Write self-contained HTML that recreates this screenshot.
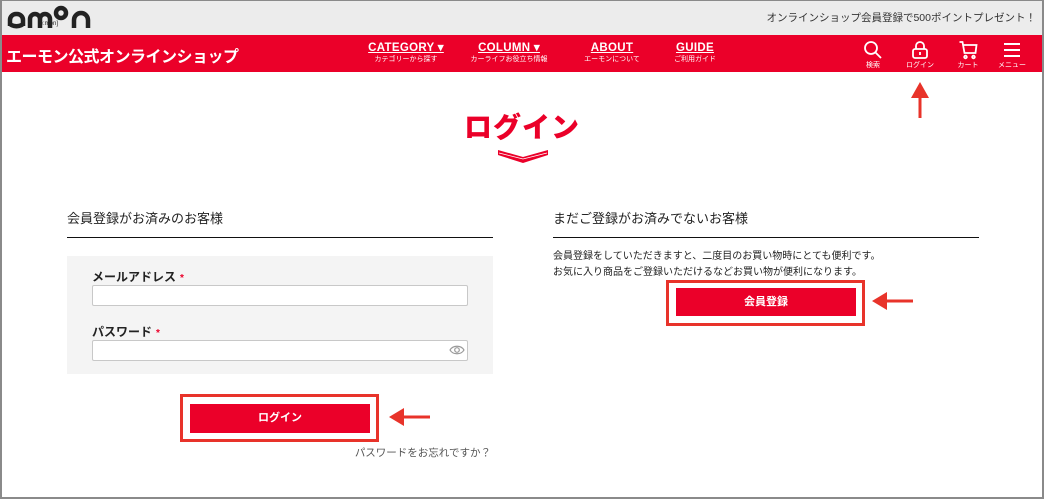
<!DOCTYPE html>
<html><head><meta charset="utf-8"><style>
*{margin:0;padding:0;box-sizing:border-box}
body{width:1044px;height:499px;position:relative;overflow:hidden;background:#fff;font-family:"Liberation Sans","Noto Sans CJK JP",sans-serif;color:#222}
.frame{position:absolute;left:0;top:0;width:1044px;height:499px;border:2px solid #8a8a8a;border-top:1px solid #8a8a8a;pointer-events:none;z-index:9}
.top{position:absolute;left:0;top:0;width:1044px;height:35px;background:#ececec}
.red{position:absolute;left:0;top:35px;width:1044px;height:37px;background:#eb0029}
.a{position:absolute;white-space:nowrap}
.nav{position:absolute;text-align:center;color:#fff;transform:translateX(-50%)}
.nav b{display:block;font-size:11.5px;font-weight:900;text-decoration:underline;letter-spacing:.3px;line-height:13px}
.nav span{display:block;font-size:7px;line-height:10px}
.ic{position:absolute;color:#fff;font-size:7px;text-align:center;transform:translateX(-50%)}
.btn{position:absolute;background:#eb0029;color:#fff;font-size:11px;font-weight:bold;text-align:center}
.box{position:absolute;border:3px solid #e8332a}
.inp{position:absolute;background:#fff;border:1px solid #c8c8c8;border-radius:2px}
.lbl{position:absolute;font-size:12px;font-weight:bold}
.lbl i{color:#eb0029;font-style:normal;font-size:10px;margin-left:4px}
</style></head><body>
<div class="top"></div>
<svg class="a" style="left:6px;top:4px" width="92" height="26" viewBox="0 0 92 26" fill="none" stroke="#222" stroke-width="4.5">
<path d="M4 22V16a6 6 0 0 1 6-6h1a6 6 0 0 1 6 6v6M17 19a6 3 0 0 1-13 0" />
<path d="M24 24V15a5 5 0 0 1 10 0v9M34 15a5 5 0 0 1 10 0v9"/>
<circle cx="55" cy="9" r="5"/>
<path d="M68 24V16a7 7 0 0 1 14 0v8"/>
</svg>
<div class="a" style="left:38px;top:21px;font-size:6px;color:#222">[é:mon]</div>
<div class="a" style="right:8px;top:10px;font-size:10.5px;color:#333">オンラインショップ会員登録で500ポイントプレゼント！</div>
<div class="red"></div>
<div class="a" style="left:6px;top:43px;font-size:16px;font-weight:bold;color:#fff;letter-spacing:-.5px">エーモン公式オンラインショップ</div>
<div class="nav" style="left:406px;top:42px"><b>CATEGORY ▾</b><span>カテゴリーから探す</span></div>
<div class="nav" style="left:509px;top:42px"><b>COLUMN ▾</b><span>カーライフお役立ち情報</span></div>
<div class="nav" style="left:612px;top:42px"><b>ABOUT</b><span>エーモンについて</span></div>
<div class="nav" style="left:695px;top:42px"><b>GUIDE</b><span>ご利用ガイド</span></div>
<div class="ic" style="left:873px;top:40px"><svg width="20" height="20" viewBox="0 0 20 20" fill="none" stroke="#fff" stroke-width="1.8"><circle cx="8" cy="8" r="6"/><path d="M12.5 12.5L18 18"/></svg><div style="margin-top:-2px">検索</div></div>
<div class="ic" style="left:920px;top:40px"><svg width="20" height="20" viewBox="0 0 20 20" fill="none" stroke="#fff" stroke-width="1.8"><path d="M6 9V6a4 4 0 0 1 8 0v3"/><rect x="3" y="9" width="14" height="9" rx="2"/><path d="M10 12v3"/></svg><div style="margin-top:-2px">ログイン</div></div>
<div class="ic" style="left:968px;top:40px"><svg width="20" height="20" viewBox="0 0 20 20" fill="none" stroke="#fff" stroke-width="1.8"><path d="M1 2h3l2 11h11l1-8H5"/><circle cx="7" cy="17" r="1.3"/><circle cx="15" cy="17" r="1.3"/></svg><div style="margin-top:-2px">カート</div></div>
<div class="ic" style="left:1012px;top:40px"><svg width="20" height="20" viewBox="0 0 20 20" stroke="#fff" stroke-width="2"><path d="M2 4h16M2 10h16M2 16h16"/></svg><div style="margin-top:-2px">メニュー</div></div>
<svg class="a" style="left:910px;top:80px" width="20" height="40" viewBox="0 0 20 40"><path d="M10 2L1 18h18z" fill="#e8332a"/><rect x="8.5" y="16" width="3" height="22" fill="#e8332a"/></svg>
<div class="a" style="left:522px;top:106px;transform:translateX(-50%);font-size:28px;font-weight:900;color:#eb0029;letter-spacing:1px">ログイン</div>
<svg class="a" style="left:497px;top:149px" width="52" height="16" viewBox="0 0 52 16"><path d="M1 1L26 8L51 1V6L26 14L1 6Z" fill="#eb0029"/><path d="M2 4L26 10L50 4" stroke="#fff" stroke-width=".8" fill="none"/></svg>
<div class="a" style="left:67px;top:208px;font-size:13px;color:#222">会員登録がお済みのお客様</div>
<div class="a" style="left:67px;top:237px;width:426px;height:1px;background:#111"></div>
<div class="a" style="left:67px;top:256px;width:426px;height:118px;background:#f4f4f4"></div>
<div class="lbl" style="left:92px;top:268px">メールアドレス<i>*</i></div>
<div class="inp" style="left:92px;top:285px;width:376px;height:21px"></div>
<div class="lbl" style="left:92px;top:323px">パスワード<i>*</i></div>
<div class="inp" style="left:92px;top:340px;width:376px;height:21px"></div>
<svg class="a" style="left:449px;top:344px" width="16" height="12" viewBox="0 0 16 12" fill="none" stroke="#999" stroke-width="1.2"><path d="M1 6C4 1 12 1 15 6C12 11 4 11 1 6Z"/><circle cx="8" cy="6" r="2.3"/></svg>
<div class="box" style="left:180px;top:394px;width:199px;height:48px"></div>
<div class="btn" style="left:190px;top:404px;width:180px;height:29px;line-height:29px">ログイン</div>
<svg class="a" style="left:388px;top:406px" width="44" height="22" viewBox="0 0 44 22"><path d="M1 11L16 2V20Z" fill="#e8332a"/><rect x="14" y="9.5" width="28" height="3" fill="#e8332a"/></svg>
<div class="a" style="right:553px;top:445px;font-size:10.5px;color:#555">パスワードをお忘れですか？</div>
<div class="a" style="left:553px;top:208px;font-size:13px;color:#222">まだご登録がお済みでないお客様</div>
<div class="a" style="left:553px;top:237px;width:426px;height:1px;background:#111"></div>
<div class="a" style="left:553px;top:249px;font-size:10px;line-height:16px;color:#222">会員登録をしていただきますと、二度目のお買い物時にとても便利です。<br>お気に入り商品をご登録いただけるなどお買い物が便利になります。</div>
<div class="box" style="left:666px;top:280px;width:199px;height:46px"></div>
<div class="btn" style="left:676px;top:288px;width:180px;height:28px;line-height:28px">会員登録</div>
<svg class="a" style="left:871px;top:290px" width="44" height="22" viewBox="0 0 44 22"><path d="M1 11L16 2V20Z" fill="#e8332a"/><rect x="14" y="9.5" width="28" height="3" fill="#e8332a"/></svg>
<div class="frame"></div>
</body></html>
